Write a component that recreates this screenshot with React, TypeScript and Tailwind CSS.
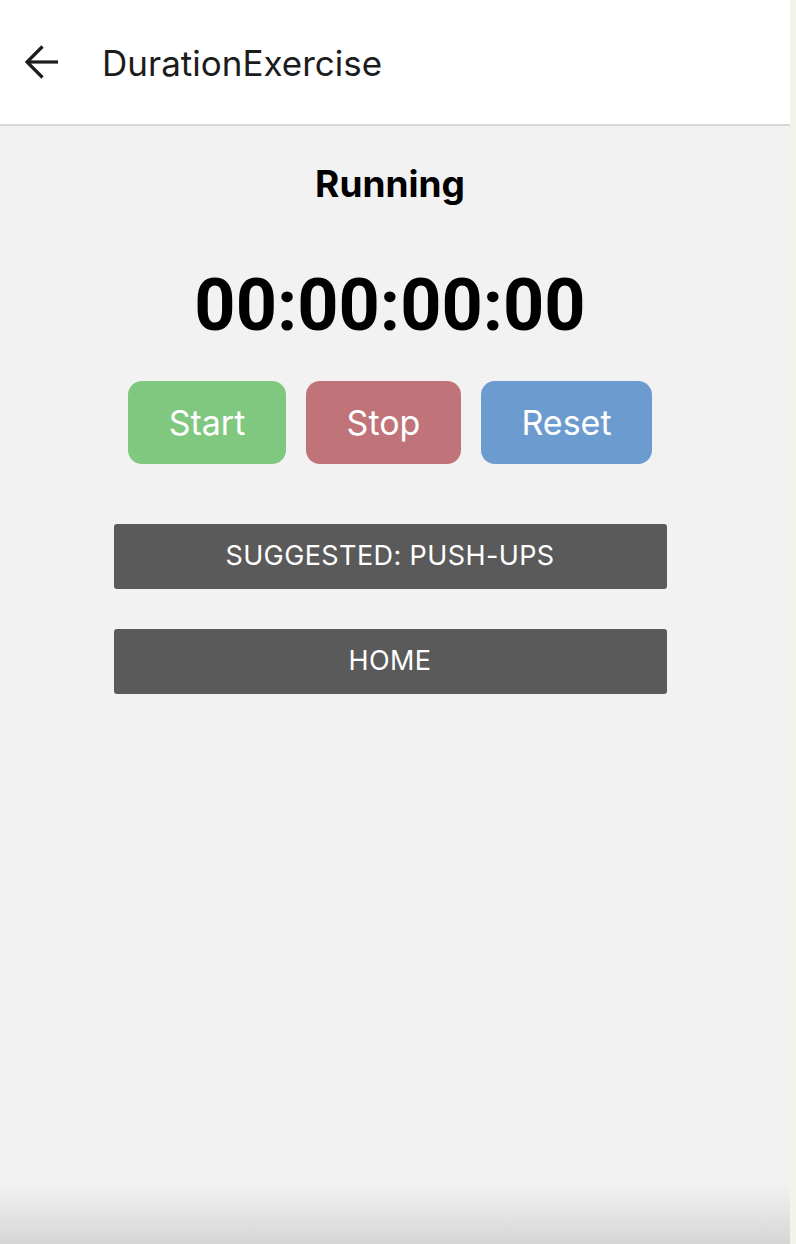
import React from "react";

export default function App() {
  const font = { fontFamily: "Inter, 'Noto Sans', sans-serif" };
  return (
    <div className="flex h-[1244px] w-[796px] overflow-hidden" style={font}>
      <div className="flex w-[790px] flex-col bg-[#f2f2f2]">
        <header className="flex h-[126px] shrink-0 items-center border-b-2 border-[#d6d6d6] bg-white">
          <div className="ml-[25px] flex h-[34px] w-[34px] items-center justify-center">
            <svg width="34" height="34" viewBox="0 0 34 34" fill="none">
              <path d="M33 17H2.5" stroke="#1c1c1c" strokeWidth="3.2" />
              <path d="M17.5 1.5L2 17l15.5 15.5" stroke="#1c1c1c" strokeWidth="3.2" />
            </svg>
          </div>
          <h1 className="ml-[43px] mt-[3px] text-[35px] font-normal leading-none text-[#1c1c1c]">
            DurationExercise
          </h1>
        </header>
        <main className="flex flex-1 flex-col items-center pr-[10px]">
          <div className="mt-[38px] text-[37px] font-bold leading-[40px] text-black">Running</div>
          <div
            className="mt-[62px] text-[72px] font-bold leading-[80px] text-black"
            style={{ fontFamily: "Roboto, Inter, sans-serif" }}
          >
            00:00:00:00
          </div>
          <div className="mt-[35px] flex gap-[20px]">
            <button className="h-[83px] w-[158px] rounded-[14px] bg-[#80c77f] text-[34px] text-white">Start</button>
            <button className="h-[83px] w-[155px] rounded-[14px] bg-[#c07378] text-[34px] text-white">Stop</button>
            <button className="h-[83px] w-[171px] rounded-[14px] bg-[#6c9bd0] text-[34px] text-white">Reset</button>
          </div>
          <button className="mt-[60px] h-[65px] w-[553px] rounded-[3px] bg-[#5a5a5a] text-[27px] font-normal uppercase tracking-[0.4px] text-white">
            Suggested: Push-ups
          </button>
          <button className="mt-[40px] h-[65px] w-[553px] rounded-[3px] bg-[#5a5a5a] text-[27px] font-normal uppercase tracking-[0.4px] text-white">
            Home
          </button>
        </main>
        <div className="h-[60px] shrink-0 bg-gradient-to-b from-[#f2f2f2] to-[#d6d6d6]" />
      </div>
      <div className="flex-1 bg-[#f2f4e8]" />
    </div>
  );
}
